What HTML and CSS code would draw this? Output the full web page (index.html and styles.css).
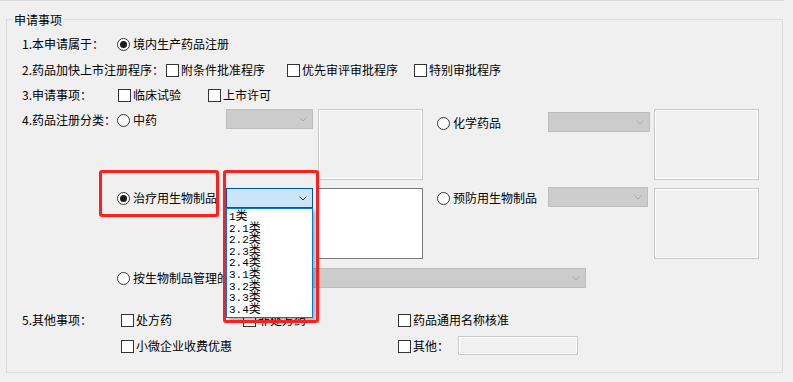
FILE: index.html
```html
<!DOCTYPE html>
<html lang="zh-CN">
<head>
  <meta charset="UTF-8">
  <title>申请事项</title>
  <link rel="stylesheet" href="styles.css">
</head>
<body>

  <div class="topline"></div>

  <fieldset class="group">
    <legend>申请事项</legend>

    <div class="row row-1">
      <span class="lbl w95">1.本申请属于：</span>
      <label class="opt"><span class="radio on"></span>境内生产药品注册</label>
    </div>

    <div class="row row-2">
      <span class="lbl w144">2.药品加快上市注册程序：</span>
      <label class="opt w121"><span class="check"></span>附条件批准程序</label>
      <label class="opt w127"><span class="check"></span>优先审评审批程序</label>
      <label class="opt"><span class="check"></span>特别审批程序</label>
    </div>

    <div class="row row-3">
      <span class="lbl w96">3.申请事项：</span>
      <label class="opt w90"><span class="check"></span>临床试验</label>
      <label class="opt"><span class="check"></span>上市许可</label>
    </div>

    <!-- 4. 药品注册分类 -->
    <div class="band band-a">
      <span class="lbl w95 mt1">4.药品注册分类：</span>
      <label class="opt w109 mt1"><span class="radio"></span>中药</label>
      <div class="select s87">
        <svg width="8" height="5" viewBox="0 0 8 5"><path d="M0.5 0.5 L4 4 L7.5 0.5"/></svg>
      </div>
      <div class="edit ml5"></div>
      <label class="opt w111 ml14 mt4"><span class="radio"></span>化学药品</label>
      <div class="select s102 mt3">
        <svg width="8" height="5" viewBox="0 0 8 5"><path d="M0.5 0.5 L4 4 L7.5 0.5"/></svg>
      </div>
      <div class="edit ml4"></div>
    </div>

    <div class="band band-b indent">
      <label class="opt w109"><span class="radio on"></span>治疗用生物制品</label>
      <div class="combo">
        <div class="select active s87">
          <svg width="8" height="5" viewBox="0 0 8 5"><path d="M0.5 0.5 L4 4 L7.5 0.5"/></svg>
        </div>
        <ul class="list">
          <li>1<span class="cn">类</span></li>
          <li>2.1<span class="cn">类</span></li>
          <li>2.2<span class="cn">类</span></li>
          <li>2.3<span class="cn">类</span></li>
          <li>2.4<span class="cn">类</span></li>
          <li>3.1<span class="cn">类</span></li>
          <li>3.2<span class="cn">类</span></li>
          <li>3.3<span class="cn">类</span></li>
          <li>3.4<span class="cn">类</span></li>
        </ul>
      </div>
      <div class="edit on ml5"></div>
      <label class="opt w111 ml14"><span class="radio"></span>预防用生物制品</label>
      <div class="select s100 mtm1">
        <svg width="8" height="5" viewBox="0 0 8 5"><path d="M0.5 0.5 L4 4 L7.5 0.5"/></svg>
      </div>
      <div class="edit ml6"></div>
    </div>

    <div class="band band-c indent">
      <label class="opt w109"><span class="radio"></span>按生物制品管理的</label>
      <div class="select s360">
        <svg width="8" height="5" viewBox="0 0 8 5"><path d="M0.5 0.5 L4 4 L7.5 0.5"/></svg>
      </div>
    </div>

    <!-- 5. 其他事项 -->
    <div class="row row-5">
      <span class="lbl w99">5.其他事项：</span>
      <label class="opt w122"><span class="check"></span>处方药</label>
      <label class="opt w155"><span class="check"></span>非处方药</label>
      <label class="opt"><span class="check"></span>药品通用名称核准</label>
    </div>

    <div class="row row-6 indent-99">
      <label class="opt w277"><span class="check"></span>小微企业收费优惠</label>
      <label class="opt w60"><span class="check"></span>其他：</label>
      <div class="edit small"></div>
    </div>
  </fieldset>

  <div class="mark mark-label"></div>
  <div class="mark mark-combo"></div>

</body>
</html>
```

FILE: styles.css
```css
body {
  margin: 0;
  background: #f0f0f0;
  font-family: "Noto Sans CJK SC", sans-serif;
  font-size: 12px;
  color: #000;
  position: relative;
  height: 382px;
  overflow: hidden;
}

.topline {
  width: 784px;
  height: 1px;
  background: #d9d9d9;
}

.group {
  margin: 11px 0 0 6px;
  width: 777px;
  min-width: 0;
  box-sizing: border-box;
  border: 1px solid #dcdcdc;
  padding: 7px 0 16px;
}

legend {
  margin-left: 5px;
  padding: 0 2px;
  line-height: 15px;
}

.row {
  display: flex;
  align-items: center;
  height: 20px;
  margin-left: 15px;
}

.row-2 { margin-top: 6px; }
.row-3 { margin-top: 5px; }
.row-5 { margin-top: 22px; }
.row-6 { margin-top: 6px; }

.band {
  display: flex;
  align-items: flex-start;
  margin-left: 15px;
}

.band-a { margin-top: 4px; }
.band-b { margin-top: 8px; }
.band-c { margin-top: 9px; }

.indent { padding-left: 95px; }
.indent-99 { padding-left: 99px; }

.lbl {
  flex: none;
  white-space: nowrap;
  line-height: 20px;
}

.opt {
  display: flex;
  align-items: center;
  flex: none;
  height: 20px;
  line-height: 20px;
  white-space: nowrap;
}

/* column widths */
.w60 { width: 60px; }
.w90 { width: 90px; }
.w95 { width: 95px; }
.w96 { width: 96px; }
.w99 { width: 99px; }
.w109 { width: 109px; }
.w111 { width: 111px; }
.w121 { width: 121px; }
.w122 { width: 122px; }
.w127 { width: 127px; }
.w144 { width: 144px; }
.w155 { width: 155px; }
.w277 { width: 277px; }

.mt1 { margin-top: 1px; }
.mt3 { margin-top: 3px; }
.mt4 { margin-top: 4px; }
.mtm1 { margin-top: -1px; }
.ml4 { margin-left: 4px; }
.ml5 { margin-left: 5px; }
.ml6 { margin-left: 6px; }
.ml14 { margin-left: 14px; }

.radio {
  flex: none;
  width: 13px;
  height: 13px;
  box-sizing: border-box;
  border: 1px solid #333;
  border-radius: 50%;
  background: #fff;
  margin-right: 3px;
  display: flex;
  align-items: center;
  justify-content: center;
}

.radio.on::after {
  content: "";
  width: 7px;
  height: 7px;
  border-radius: 50%;
  background: #1a1a1a;
}

.check {
  flex: none;
  width: 13px;
  height: 13px;
  box-sizing: border-box;
  border: 1px solid #333;
  background: #fff;
  margin-right: 2px;
}

.select {
  flex: none;
  height: 20px;
  box-sizing: border-box;
  border: 1px solid #bdbdbd;
  background: #cccccc;
  display: flex;
  align-items: center;
  justify-content: flex-end;
  padding-right: 5px;
}

.select svg path {
  fill: none;
  stroke: #a8a8a8;
  stroke-width: 1;
}

.select.active {
  background: #cce4f7;
  border-color: #005499;
}

.select.active svg path {
  stroke: #333;
}

.s87 { width: 87px; }
.s100 { width: 100px; }
.s102 { width: 102px; }
.s360 { width: 360px; }

.edit {
  flex: none;
  width: 105px;
  height: 71px;
  box-sizing: border-box;
  border: 1px solid #c8c8c8;
  box-shadow: inset 0 0 0 1px #fff;
  background: #f0f0f0;
}

.edit.on {
  border-color: #7a7a7a;
  box-shadow: none;
  background: #fff;
}

.edit.small {
  width: 120px;
  height: 19px;
  margin-top: -1px;
}

/* open dropdown */
.combo {
  position: relative;
  flex: none;
}

.list {
  position: absolute;
  top: 20px;
  left: 0;
  z-index: 2;
  width: 87px;
  height: 110px;
  box-sizing: border-box;
  margin: 0;
  padding: 0 0 0 2px;
  list-style: none;
  overflow: hidden;
  background: #fff;
  border: 1px solid #0078d7;
  box-shadow: 3px 3px 3px rgba(0, 0, 0, 0.25);
  font-family: "Liberation Mono", "Noto Sans CJK SC", monospace;
  font-size: 11px;
  line-height: 11px;
}

.list li {
  height: 11.6px;
}

.list .cn {
  font-family: "Noto Sans CJK SC", sans-serif;
  font-size: 12px;
  line-height: 11px;
}

/* red highlight frames */
.mark {
  position: absolute;
  z-index: 3;
  box-sizing: border-box;
  border: 3px solid #ff1f1f;
  border-radius: 3px;
}

.mark-label {
  left: 99px;
  top: 170px;
  width: 120px;
  height: 47px;
}

.mark-combo {
  left: 223px;
  top: 170px;
  width: 96px;
  height: 153px;
}
```
